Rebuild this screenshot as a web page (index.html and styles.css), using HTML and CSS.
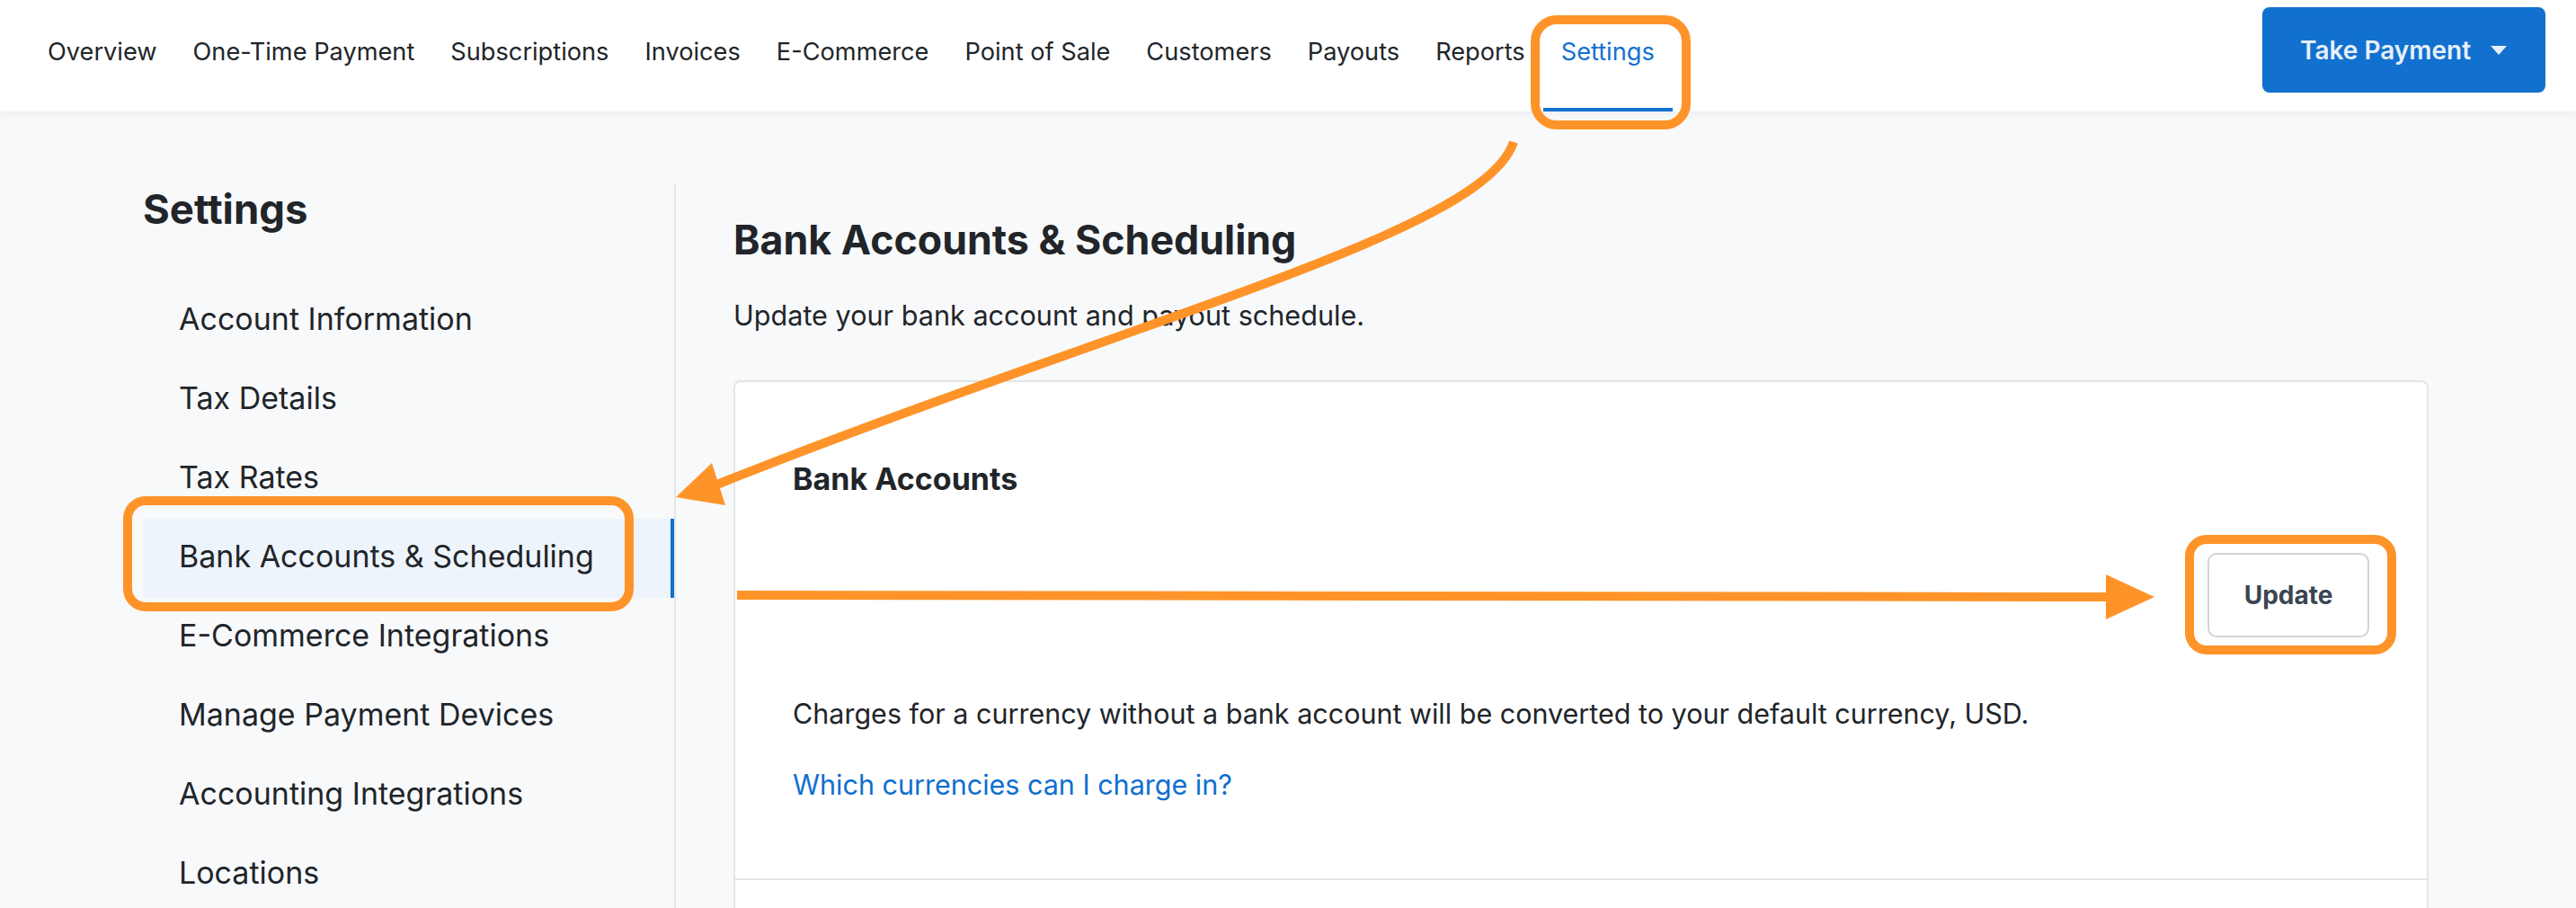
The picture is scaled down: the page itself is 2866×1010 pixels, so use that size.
FILE: index.html
```html
<!DOCTYPE html>
<html lang="en">
<head>
<meta charset="utf-8">
<title>Settings - Bank Accounts &amp; Scheduling</title>
<link rel="stylesheet" href="styles.css">
</head>
<body>
<div class="page">
  <header class="topnav">
    <nav class="tabs">
      <a class="tab">Overview</a>
      <a class="tab">One-Time Payment</a>
      <a class="tab">Subscriptions</a>
      <a class="tab">Invoices</a>
      <a class="tab">E-Commerce</a>
      <a class="tab">Point of Sale</a>
      <a class="tab">Customers</a>
      <a class="tab">Payouts</a>
      <a class="tab">Reports</a>
      <a class="tab active">Settings</a>
    </nav>
    <button class="take-payment">
      <span>Take Payment</span>
      <svg class="caret" width="18" height="10" viewBox="0 0 18 10"><path d="M0 0 H18 L9 10 Z"/></svg>
    </button>
  </header>

  <div class="layout">
    <aside class="sidebar">
      <h2 class="sidebar-title">Settings</h2>
      <ul class="side-menu">
        <li class="side-item">Account Information</li>
        <li class="side-item">Tax Details</li>
        <li class="side-item">Tax Rates</li>
        <li class="side-item selected">Bank Accounts &amp; Scheduling</li>
        <li class="side-item">E-Commerce Integrations</li>
        <li class="side-item">Manage Payment Devices</li>
        <li class="side-item">Accounting Integrations</li>
        <li class="side-item">Locations</li>
      </ul>
    </aside>

    <main class="content">
      <h1 class="page-title">Bank Accounts &amp; Scheduling</h1>
      <p class="page-sub">Update your bank account and payout schedule.</p>

      <section class="card">
        <div class="card-section">
          <h3 class="card-title">Bank Accounts</h3>
          <div class="btn-row">
            <button class="btn-update">Update</button>
          </div>
          <p class="card-text">Charges for a currency without a bank account will be converted to your default currency, USD.</p>
          <a class="card-link">Which currencies can I charge in?</a>
        </div>
        <div class="card-section empty"></div>
      </section>
    </main>
  </div>

  <svg class="annotations" width="2866" height="1010" viewBox="0 0 2866 1010">
    <g fill="none" stroke="#fe9429" stroke-width="10">
      <rect x="1708" y="22" width="168" height="117" rx="24"/>
      <rect x="142" y="557" width="558" height="118" rx="20"/>
      <rect x="2436" y="600" width="225" height="123" rx="19"/>
      <path d="M820 662 L2350 664"/>
      <path d="M1684 158 C1650 260 1265 353 795 540"/>
    </g>
    <g fill="#fe9429">
      <polygon points="2343,639 2397,664 2343,689"/>
      <polygon points="752,553 792,515 807,562"/>
    </g>
  </svg>
</div>
</body>
</html>
```

FILE: styles.css
```css
* {
  box-sizing: border-box;
}

html, body {
  margin: 0;
  padding: 0;
}

body {
  font-family: "Inter", "Noto Sans", sans-serif;
  color: #212529;
  background: #f8f9fb;
  overflow: hidden;
}

.page {
  position: relative;
  width: 2866px;
  height: 1010px;
  overflow: hidden;
}

/* ---------- top nav ---------- */
.topnav {
  height: 124px;
  background: #ffffff;
  display: flex;
  align-items: flex-start;
  padding: 0 34px 0 33px;
  box-shadow: 0 2px 10px rgba(0, 0, 0, 0.06);
  position: relative;
  z-index: 1;
}

.tabs {
  display: flex;
  height: 124px;
}

.tab {
  display: flex;
  align-items: center;
  height: 124px;
  padding: 0 20px 6px;
  border-bottom: 4px solid transparent;
  font-size: 27.2px;
  color: #212529;
  white-space: nowrap;
}

.tab.active {
  color: #1270d0;
  border-bottom-color: #1270d0;
}

.take-payment {
  margin-left: auto;
  margin-top: 8px;
  height: 95px;
  width: 315px;
  display: flex;
  align-items: center;
  padding: 0 0 0 42px;
  gap: 22px;
  border: none;
  border-radius: 8px;
  background: #1271cf;
  color: #e7eff9;
  font-family: "Inter", "Noto Sans", sans-serif;
  font-size: 28px;
  font-weight: 600;
}

.caret {
  fill: #e7eff9;
}

/* ---------- layout ---------- */
.layout {
  display: grid;
  grid-template-columns: 593px 1fr;
  column-gap: 64px;
  padding: 80px 164px 0 159px;
  min-height: 886px;
}

/* ---------- sidebar ---------- */
.sidebar {
  border-right: 2px solid #e4e5e7;
}

.sidebar-title {
  margin: 0 0 51px;
  font-size: 45.5px;
  line-height: 58px;
  font-weight: 700;
  color: #212529;
}

.side-menu {
  list-style: none;
  margin: 0;
  padding: 0;
}

.side-item {
  height: 88px;
  line-height: 84px;
  padding-left: 40px;
  font-size: 34px;
  color: #212529;
  white-space: nowrap;
}

.side-item.selected {
  background: #eef4fb;
  border-right: 4px solid #1270d0;
}

/* ---------- content ---------- */
.content {
  padding-top: 35px;
}

.page-title {
  margin: 0;
  font-size: 44.7px;
  line-height: 56px;
  font-weight: 700;
}

.page-sub {
  margin: 36px 0 52px;
  font-size: 30.6px;
  line-height: 40px;
}

.card {
  background: #ffffff;
  border: 2px solid #e4e5e7;
  border-radius: 8px;
}

.card-section {
  padding: 88px 64px 84px;
  border-bottom: 2px solid #e4e5e7;
}

.card-section.empty {
  height: 200px;
  border-bottom: none;
}

.card-title {
  margin: 0;
  font-size: 34px;
  line-height: 40px;
  font-weight: 700;
}

.btn-row {
  display: flex;
  justify-content: flex-end;
  margin-top: 62px;
}

.btn-update {
  width: 180px;
  height: 94px;
  border: 2px solid #d3d3d3;
  border-radius: 10px;
  background: #ffffff;
  color: #3b4551;
  font-family: "Inter", "Noto Sans", sans-serif;
  font-size: 28px;
  font-weight: 700;
}

.card-text {
  margin: 65px 0 0;
  font-size: 30.5px;
  line-height: 40px;
}

.card-link {
  display: block;
  margin-top: 39px;
  font-size: 30.5px;
  line-height: 40px;
  color: #0f6fd0;
}

/* ---------- annotation overlay ---------- */
.annotations {
  position: absolute;
  left: 0;
  top: 0;
  pointer-events: none;
  z-index: 5;
}
```
